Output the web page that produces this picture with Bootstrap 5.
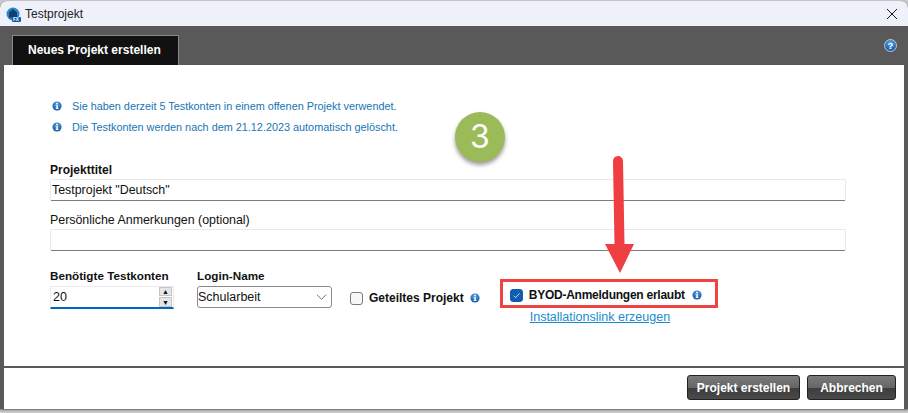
<!DOCTYPE html>
<html lang="de">
<head>
    <meta charset="UTF-8">
    <title>Testprojekt</title>
    <meta name="viewport" content="width=device-width, initial-scale=1">
    <link href="https://cdn.jsdelivr.net/npm/bootstrap@5.3.2/dist/css/bootstrap.min.css" rel="stylesheet">
    <style>
        html, body { height: 100%; }
        body {
            background: #c9c9c9;
            font-family: "Liberation Sans", Arial, sans-serif;
            font-size: 12px;
            color: #111;
            overflow: hidden;
            padding-top: 1px;
        }
        .app-window {
            position: relative;
            width: 908px;
            height: 408px;
            background: #595959;
            border-radius: 7px 7px 0 0;
            box-shadow: 0 1px 2px rgba(0,0,0,.5);
        }
        .title-bar {
            height: 25px;
            background: #eef1fa;
            border-radius: 7px 7px 0 0;
            padding: 2px 0 0 6px;
            font-size: 12px;
            color: #222;
            gap: 5px;
        }
        .close-x { width: 10px; height: 10px; margin-right: 11px; }
        .tab-band { height: 39px; padding-left: 12px; }
        .project-tab {
            width: 167px;
            height: 30px;
            margin-top: 9px;
            background: #111;
            border: 1px solid #8a8a8a;
            border-bottom: 0;
            color: #fff;
            font-weight: 700;
            font-size: 12px;
            padding-left: 15px;
        }
        .help-icon { margin-right: 11px; margin-top: 13px; }
        .main-pane {
            height: 302px;
            margin: 0 4px 0 4px;
            background: #fff;
            padding: 31px 58px 0 46px;
        }
        .hint-line {
            height: 21px;
            color: #1576b5;
            font-size: 10.85px;
            padding-left: 2px;
            gap: 10px;
        }
        .hint-last { margin-bottom: 25px; }
        .field-label { font-size: 12px; line-height: 14px; margin-bottom: 2px; }
        .note-label { font-size: 12.4px; margin-top: 12px; }
        .flat-input.form-control {
            height: 22px;
            padding: 0 1px;
            font-size: 12.4px;
            color: #111;
            border: 1px solid #e9e9e9;
            border-bottom: 1px solid #7d7d7d;
            border-radius: 2px;
            box-shadow: none;
        }
        .options-row { margin-top: 14px; }
        .options-label { font-size: 11.7px; margin-top: 4px; margin-bottom: 3px; }
        .spin-block { margin-right: 23px; }
        .spin-wrap {
            width: 124px;
            height: 23px;
            border: 1px solid #ececec;
            border-bottom: 2px solid #0067c0;
            padding: 0 1px 0 2px;
            font-size: 12.5px;
        }
        .spin-col { width: 13px; height: 20px; gap: 1px; }
        .spin-btn {
            flex: 1;
            background: #e6e6e6;
            border: 1px solid #c4c4c4;
            font-size: 7px;
            line-height: 1;
            color: #111;
        }
        .login-select.form-select {
            width: 135px;
            height: 22px;
            padding: 0;
            font-size: 12.5px;
            color: #111;
            border: 1px solid #8a8a8a;
            border-radius: 3px;
            background-image: url("data:image/svg+xml,%3csvg xmlns='http://www.w3.org/2000/svg' viewBox='0 0 12 8'%3e%3cpath fill='none' stroke='%23666' d='M1 1.5l5 5 5-5'/%3e%3c/svg%3e");
            background-position: right 4px center;
            background-size: 11px 8px;
        }
        .flag-box.form-check-input {
            width: 13px;
            height: 13px;
            margin: 0;
            border: 1px solid #7a7a7a;
            border-radius: 3px;
            background-color: #f7f7f7;
            float: none;
            flex: none;
        }
        .flag-box.form-check-input:checked {
            background-color: #0f5cb0;
            border-color: #0f5cb0;
            background-image: url("data:image/svg+xml,%3csvg xmlns='http://www.w3.org/2000/svg' viewBox='0 0 20 20'%3e%3cpath fill='none' stroke='%23dfe9f5' stroke-width='1.6' d='M5 10.5l3.5 3.5 7-8'/%3e%3c/svg%3e");
        }
        .flag-text { font-size: 12px; font-weight: 700; margin: 0; }
        .shared-group { margin: 27px 0 0 18px; height: 13px; gap: 6px; }
        .byod-group { margin: 14px 0 0 20px; }
        .byod-frame {
            width: 218px;
            height: 29px;
            border: 3px solid #ef4242;
            padding: 4px 0 0 7px;
            gap: 6px;
        }
        .byod-text { letter-spacing: -.25px; margin-right: 1px; }
        .install-link { color: #1b8ccf; font-size: 12.5px; margin: 2px 0 0 30px; line-height: 14px; }
        .action-bar {
            height: 41px;
            margin: 2px 4px 0 4px;
            background: #fff;
            padding: 7px 8px 0 0;
            gap: 7px;
        }
        .dark-btn.btn {
            height: 25px;
            padding: 0;
            font-size: 12px;
            font-weight: 700;
            color: #fff;
            border: 1px solid #222;
            border-radius: 3px;
            background: linear-gradient(#7a7a7a, #666 50%, #3d3d3d 52%, #4a4a4a);
        }
        .btn-create { width: 113px; }
        .btn-cancel { width: 89px; }
        .step-badge {
            position: absolute;
            left: 455px;
            top: 111px;
            width: 50px;
            height: 50px;
            border-radius: 50%;
            background: #9bbb59;
            color: #fff;
            font-family: "Inter", "Liberation Sans", sans-serif;
            font-size: 32px;
            font-weight: 400;
            box-shadow: 0 3px 4px rgba(0,0,0,.4);
        }
        .red-arrow { position: absolute; left: 600px; top: 154px; }
    </style>
</head>
<body>
    <svg width="0" height="0" class="d-block">
        <defs>
            <radialGradient id="blueBall" cx="50%" cy="30%" r="75%">
                <stop offset="0" stop-color="#5aa2e0"/>
                <stop offset="1" stop-color="#0f4f9f"/>
            </radialGradient>
            <symbol id="infoIcon" viewBox="0 0 12 12">
                <circle cx="6" cy="6" r="5.5" fill="url(#blueBall)"/>
                <rect x="5" y="2.2" width="2" height="1.8" fill="#fff"/>
                <path d="M4.4 5h2.6v3.6h.8v1H4.4v-1h.8V6h-.8z" fill="#fff"/>
            </symbol>
        </defs>
    </svg>

    <div class="app-window d-flex flex-column">
        <div class="title-bar d-flex align-items-center justify-content-between">
            <div class="d-flex align-items-center gap-1">
                <svg width="15" height="16" viewBox="0 0 15 16">
                    <circle cx="7" cy="8" r="6.5" fill="#2a86c8"/>
                    <path d="M7 3l4 3.5v5H3v-5z" fill="#123f73"/>
                    <rect x="6" y="11" width="9" height="5" rx="1" fill="#0e5fa8"/>
                    <text x="7" y="15.4" font-size="4.6" font-weight="700" fill="#fff" font-family="Liberation Sans">FX</text>
                </svg>
                <span>Testprojekt</span>
            </div>
            <svg class="close-x" viewBox="0 0 10 10"><path d="M0 0l10 10M10 0L0 10" stroke="#111" stroke-width="1"/></svg>
        </div>

        <div class="tab-band d-flex justify-content-between align-items-start">
            <div class="project-tab d-flex align-items-center">Neues Projekt erstellen</div>
            <svg class="help-icon" width="13" height="13" viewBox="0 0 13 13">
                <circle cx="6.5" cy="6.5" r="6" fill="url(#blueBall)" stroke="#cfe2f5" stroke-width=".8"/>
                <text x="6.5" y="10" text-anchor="middle" font-size="9.5" font-weight="700" fill="#fff" font-family="Liberation Sans">?</text>
            </svg>
        </div>

        <div class="main-pane">
            <div class="hint-line d-flex align-items-center">
                <svg width="10" height="10"><use href="#infoIcon"/></svg>
                <span>Sie haben derzeit 5 Testkonten in einem offenen Projekt verwendet.</span>
            </div>
            <div class="hint-line hint-last d-flex align-items-center">
                <svg width="10" height="10"><use href="#infoIcon"/></svg>
                <span>Die Testkonten werden nach dem 21.12.2023 automatisch gelöscht.</span>
            </div>

            <div class="field-label fw-bold">Projekttitel</div>
            <input class="form-control flat-input mb-2" type="text" value='Testprojekt "Deutsch"'>
            <div class="field-label note-label">Persönliche Anmerkungen (optional)</div>
            <input class="form-control flat-input" type="text">

            <div class="options-row d-flex align-items-start">
                <div class="spin-block">
                    <div class="field-label options-label fw-bold">Benötigte Testkonten</div>
                    <div class="spin-wrap d-flex align-items-center justify-content-between">
                        <span>20</span>
                        <div class="spin-col d-flex flex-column">
                            <div class="spin-btn d-flex align-items-center justify-content-center">▲</div>
                            <div class="spin-btn d-flex align-items-center justify-content-center">▼</div>
                        </div>
                    </div>
                </div>
                <div>
                    <div class="field-label options-label fw-bold">Login-Name</div>
                    <select class="form-select login-select">
                        <option>Schularbeit</option>
                    </select>
                </div>
                <div class="shared-group d-flex align-items-center">
                    <input class="form-check-input flag-box" type="checkbox" id="sharedFlag">
                    <label class="flag-text" for="sharedFlag">Geteiltes Projekt</label>
                    <svg width="10" height="10"><use href="#infoIcon"/></svg>
                </div>
                <div class="byod-group">
                    <div class="byod-frame d-flex align-items-center">
                        <input class="form-check-input flag-box" type="checkbox" id="byodFlag" checked>
                        <label class="flag-text byod-text" for="byodFlag">BYOD-Anmeldungen erlaubt</label>
                        <svg width="10" height="10"><use href="#infoIcon"/></svg>
                    </div>
                    <a class="install-link d-block" href="#">Installationslink erzeugen</a>
                </div>
            </div>
        </div>

        <div class="action-bar d-flex justify-content-end">
            <button class="btn dark-btn btn-create" type="button">Projekt erstellen</button>
            <button class="btn dark-btn btn-cancel" type="button">Abbrechen</button>
        </div>

        <div class="step-badge d-flex align-items-center justify-content-center">3</div>
        <svg class="red-arrow" width="38" height="122" viewBox="0 0 38 122">
            <path d="M18 6 L19.5 90" stroke="#ef3e42" stroke-width="10" stroke-linecap="round" fill="none"/>
            <path d="M5 89 H34 L20 118 Z" fill="#ef3e42"/>
        </svg>
    </div>
</body>
</html>
